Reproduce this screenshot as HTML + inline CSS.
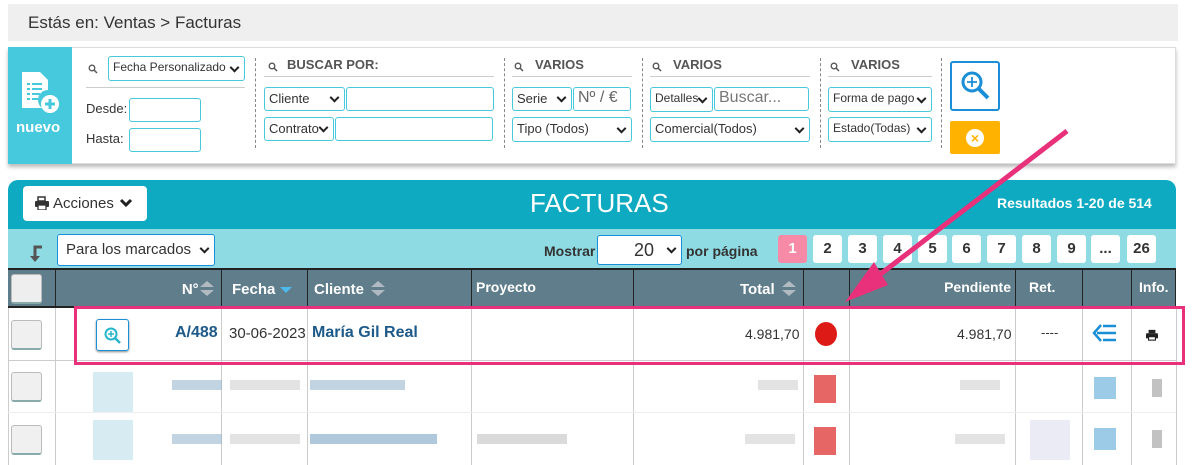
<!DOCTYPE html>
<html><head><meta charset="utf-8"><style>
*{box-sizing:border-box;margin:0;padding:0}
body{width:1194px;height:465px;overflow:hidden;background:#fff;font-family:"Liberation Sans",sans-serif;position:relative;color:#333}
.a{position:absolute}
.inp{position:absolute;border:1px solid #46c9dc;border-radius:3px;background:#fff;font-size:13px;padding:3px 4px;color:#333;white-space:nowrap;overflow:hidden}
.sel{padding-right:16px}
.sel::after{content:"";position:absolute;right:6px;top:50%;width:5px;height:5px;border-right:2px solid #222;border-bottom:2px solid #222;transform:translateY(-70%) rotate(45deg)}
.lbl{position:absolute;font-size:13px;font-weight:bold;color:#555}
.sep{position:absolute;border-left:1px dashed #888;top:58px;height:90px}
.hl{position:absolute;border-bottom:1px solid #ccc}
.pg{position:absolute;top:235px;width:29px;height:28px;background:#fff;border-radius:3px;text-align:center;line-height:28px;font-size:15px;font-weight:bold;color:#333}
.th{position:absolute;top:268px;height:40px;border-left:1px solid #222;color:#fff;font-weight:bold;font-size:15px}
.vl{position:absolute;border-left:1px solid #ccc;top:308px;height:157px}
.cb{position:absolute;left:11px;width:31px;height:30px;background:#f0f0f0;border:1px solid #bbb;border-bottom:2px solid #8aa;border-radius:3px}
.bl{position:absolute;height:10px;opacity:.55}
.mg{display:inline-block;vertical-align:middle}
.srt{display:inline-block;width:0;height:0;vertical-align:middle;margin-left:4px;position:relative;top:-1px}
.srt::before{content:"";position:absolute;left:-7px;top:-8px;border:7px solid transparent;border-top:none;border-bottom:6px solid #b0bac0}
.srt::after{content:"";position:absolute;left:-7px;top:1px;border:7px solid transparent;border-bottom:none;border-top:6px solid #b0bac0}
</style></head><body>
<div class="a" style="left:8px;top:4px;width:1170px;height:37px;background:#efefef"></div>
<div class="a" style="left:28px;top:13px;font-size:17px;color:#333">Estás en: Ventas &gt; Facturas</div>

<div class="a" style="left:8px;top:47px;width:1168px;height:117px;border:1px solid #ddd;box-shadow:0 3px 4px #bbb;background:#fff"></div>
<div class="a" style="left:8px;top:47px;width:64px;height:117px;background:#46c9dc"></div>
<svg class="a" style="left:20px;top:70px" width="42" height="46" viewBox="0 0 42 46"><path d="M2 2h18l8 8v10a10 10 0 0 0-6 18H2z" fill="#fff"/><g stroke="#46c9dc" stroke-width="2"><path d="M7 14h3M12 14h10M7 19h3M12 19h10M7 24h3M12 24h8M7 29h3M12 29h6"/></g><circle cx="30" cy="34" r="9" fill="#fff"/><path d="M30 29v10M25 34h10" stroke="#46c9dc" stroke-width="3"/></svg>
<div class="a" style="left:16px;top:119px;color:#fff;font-weight:bold;font-size:15px">nuevo</div>

<svg class="a" style="left:88px;top:64px" width="10" height="10" viewBox="0 0 10 10"><circle cx="4" cy="4" r="2.8" fill="none" stroke="#555" stroke-width="1.3"/><path d="M6 6l3 3" stroke="#555" stroke-width="1.5"/></svg>
<div class="inp sel" style="left:108px;top:56px;width:137px;height:25px;font-size:12px">Fecha Personalizado</div>
<div class="hl" style="left:86px;top:87px;width:159px"></div>
<div class="a" style="left:86px;top:101px;font-size:13px">Desde:</div>
<div class="a" style="left:86px;top:131px;font-size:13px">Hasta:</div>
<div class="inp" style="left:129px;top:98px;width:72px;height:24px"></div>
<div class="inp" style="left:129px;top:128px;width:72px;height:24px"></div>
<div class="sep" style="left:255px"></div>

<svg class="a" style="left:268px;top:62px" width="10" height="10" viewBox="0 0 10 10"><circle cx="4" cy="4" r="2.8" fill="none" stroke="#555" stroke-width="1.3"/><path d="M6 6l3 3" stroke="#555" stroke-width="1.5"/></svg>
<div class="lbl" style="left:287px;top:57px">BUSCAR POR:</div>
<div class="hl" style="left:264px;top:76px;width:230px"></div>
<div class="inp sel" style="left:264px;top:87px;width:81px;height:24px">Cliente</div>
<div class="inp" style="left:346px;top:87px;width:148px;height:24px"></div>
<div class="inp sel" style="left:264px;top:117px;width:70px;height:24px">Contrato</div>
<div class="inp" style="left:335px;top:117px;width:158px;height:24px"></div>
<div class="sep" style="left:504px"></div>

<svg class="a" style="left:514px;top:62px" width="10" height="10" viewBox="0 0 10 10"><circle cx="4" cy="4" r="2.8" fill="none" stroke="#555" stroke-width="1.3"/><path d="M6 6l3 3" stroke="#555" stroke-width="1.5"/></svg>
<div class="lbl" style="left:535px;top:57px">VARIOS</div>
<div class="hl" style="left:512px;top:76px;width:120px"></div>
<div class="inp sel" style="left:512px;top:87px;width:60px;height:24px">Serie</div>
<div class="inp" style="left:573px;top:87px;width:58px;height:24px;font-size:16px;padding:1px 4px;color:#666">Nº / €</div>
<div class="inp sel" style="left:512px;top:117px;width:120px;height:25px">Tipo (Todos)</div>
<div class="sep" style="left:642px"></div>

<svg class="a" style="left:652px;top:62px" width="10" height="10" viewBox="0 0 10 10"><circle cx="4" cy="4" r="2.8" fill="none" stroke="#555" stroke-width="1.3"/><path d="M6 6l3 3" stroke="#555" stroke-width="1.5"/></svg>
<div class="lbl" style="left:673px;top:57px">VARIOS</div>
<div class="hl" style="left:650px;top:76px;width:160px"></div>
<div class="inp sel" style="left:650px;top:87px;width:63px;height:25px;font-size:12px">Detalles</div>
<div class="inp" style="left:714px;top:87px;width:95px;height:24px;font-size:16px;padding:1px 4px;color:#777">Buscar...</div>
<div class="inp sel" style="left:650px;top:117px;width:160px;height:25px">Comercial(Todos)</div>
<div class="sep" style="left:820px"></div>

<svg class="a" style="left:830px;top:62px" width="10" height="10" viewBox="0 0 10 10"><circle cx="4" cy="4" r="2.8" fill="none" stroke="#555" stroke-width="1.3"/><path d="M6 6l3 3" stroke="#555" stroke-width="1.5"/></svg>
<div class="lbl" style="left:851px;top:57px">VARIOS</div>
<div class="hl" style="left:828px;top:76px;width:104px"></div>
<div class="inp sel" style="left:828px;top:87px;width:104px;height:25px;font-size:12px">Forma de pago</div>
<div class="inp sel" style="left:828px;top:117px;width:104px;height:25px;font-size:12px">Estado(Todas)</div>
<div class="sep" style="left:941px"></div>

<div class="a" style="left:950px;top:61px;width:50px;height:50px;border:2px solid #1a8fd8;border-radius:3px"></div>
<svg class="a" style="left:959px;top:69px" width="32" height="34" viewBox="0 0 32 34"><circle cx="13" cy="13" r="9" fill="none" stroke="#1a8fd8" stroke-width="3"/><path d="M13 8v10M8 13h10" stroke="#1a8fd8" stroke-width="1.8"/><path d="M20 20l9 9" stroke="#1a8fd8" stroke-width="4"/></svg>
<div class="a" style="left:950px;top:121px;width:50px;height:33px;background:#ffb300;border-radius:2px"></div>
<div class="a" style="left:966px;top:129px;width:18px;height:18px;border-radius:50%;background:#fff;color:#ffb300;font-size:14px;font-weight:bold;text-align:center;line-height:18px">×</div>

<div class="a" style="left:8px;top:180px;width:1168px;height:49px;background:#0eaac1;border-radius:10px 10px 0 0"></div>
<div class="a" style="left:23px;top:186px;width:124px;height:35px;background:#fff;border-radius:4px"></div>
<svg class="a" style="left:35px;top:196px" width="14" height="14" viewBox="0 0 14 14"><path d="M3 1h7v4H3z" fill="none" stroke="#333" stroke-width="1.5"/><rect x="0" y="5" width="14" height="6" rx="1" fill="#333"/><rect x="3" y="9" width="8" height="5" fill="#fff" stroke="#333" stroke-width="1.3"/></svg>
<div class="a" style="left:53px;top:195px;font-size:15px;color:#333">Acciones</div>
<svg class="a" style="left:119px;top:198px" width="14" height="10" viewBox="0 0 14 10"><path d="M2 2l5 5 5-5" fill="none" stroke="#222" stroke-width="3"/></svg>
<div class="a" style="left:530px;top:188px;font-size:26px;color:#fff">FACTURAS</div>
<div class="a" style="left:997px;top:195px;font-size:14px;color:#fff;font-weight:bold">Resultados 1-20 de 514</div>

<div class="a" style="left:8px;top:229px;width:1168px;height:39px;background:#8fdbe4"></div>
<svg class="a" style="left:28px;top:245px" width="16" height="18" viewBox="0 0 16 18"><path d="M14 2H7v10" fill="none" stroke="#555" stroke-width="3"/><path d="M2 11h10l-5 6z" fill="#555"/></svg>
<div class="inp sel" style="left:57px;top:234px;width:158px;height:32px;border-color:#1a8fd8;font-size:15px;padding:6px 8px">Para los marcados</div>
<div class="a" style="left:544px;top:243px;font-size:14px;font-weight:bold;color:#333">Mostrar</div>
<div class="inp sel" style="left:597px;top:235px;width:85px;height:30px;border-color:#1a8fd8;font-size:18px;padding:4px 0 0 36px">20</div>
<div class="a" style="left:686px;top:243px;font-size:14px;font-weight:bold;color:#333">por página</div>
<div class="pg" style="left:778px;background:#f78aa6;color:#fff">1</div>
<div class="pg" style="left:813px">2</div><div class="pg" style="left:848px">3</div><div class="pg" style="left:883px">4</div><div class="pg" style="left:918px">5</div><div class="pg" style="left:952px">6</div><div class="pg" style="left:987px">7</div><div class="pg" style="left:1022px">8</div><div class="pg" style="left:1057px">9</div><div class="pg" style="left:1091px">...</div><div class="pg" style="left:1127px">26</div>

<div class="a" style="left:8px;top:268px;width:1168px;height:40px;background:#607d8b;border-top:2px solid #222;border-bottom:2px solid #222"></div>
<div class="cb" style="top:274px;background:#eee"></div>
<div class="th" style="left:55px;width:166px;text-align:right;padding:13px 10px 0 0">N° <span class="srt"></span>&nbsp;</div>
<div class="th" style="left:221px;width:86px;padding:13px 0 0 10px">Fecha <svg width="12" height="8" viewBox="0 0 12 8"><path d="M0 1h12L6 7z" fill="#4db8ea"/></svg></div>
<div class="th" style="left:307px;width:164px;padding:13px 0 0 6px">Cliente <span class="srt" style="margin-left:10px"></span></div>
<div class="th" style="left:471px;width:162px;padding:11px 0 0 4px;font-size:14px">Proyecto</div>
<div class="th" style="left:633px;width:170px;text-align:right;padding:13px 10px 0 0">Total <span class="srt" style="margin-left:10px"></span>&nbsp;</div>
<div class="th" style="left:803px;width:46px"></div>
<div class="th" style="left:849px;width:166px;text-align:right;padding:11px 4px 0 0;font-size:14px">Pendiente</div>
<div class="th" style="left:1015px;width:67px;padding:11px 0 0 13px;font-size:14px">Ret.</div>
<div class="th" style="left:1082px;width:49px"></div>
<div class="th" style="left:1131px;width:45px;padding:11px 0 0 7px;font-size:14px;border-right:1px solid #222">Info.</div>

<div class="vl" style="left:8px"></div><div class="vl" style="left:55px"></div><div class="vl" style="left:221px"></div><div class="vl" style="left:307px"></div><div class="vl" style="left:471px"></div><div class="vl" style="left:633px"></div><div class="vl" style="left:803px"></div><div class="vl" style="left:849px"></div><div class="vl" style="left:1015px"></div><div class="vl" style="left:1082px"></div><div class="vl" style="left:1131px"></div><div class="vl" style="left:1176px"></div>
<div class="a" style="left:8px;top:360px;width:1168px;border-top:1px solid #ccc"></div>
<div class="a" style="left:8px;top:412px;width:1168px;border-top:1px solid #eee"></div>
<div class="cb" style="top:320px"></div><div class="cb" style="top:372px"></div><div class="cb" style="top:425px"></div>

<div class="a" style="left:96px;top:319px;width:33px;height:32px;border:1px solid #1a8fd8;border-radius:3px;box-shadow:0 1px 2px #888"></div>
<svg class="a" style="left:103px;top:326px" width="20" height="20" viewBox="0 0 20 20"><circle cx="8" cy="8" r="5.5" fill="none" stroke="#26b5c9" stroke-width="2"/><path d="M8 5v6M5 8h6" stroke="#26b5c9" stroke-width="1.5"/><path d="M12 12l5 5" stroke="#26b5c9" stroke-width="2.5"/></svg>
<div class="a" style="left:175px;top:324px;font-size:16px;font-weight:bold;color:#1d5a8a">A/488</div>
<div class="a" style="left:229px;top:325px;font-size:15px;color:#333">30-06-2023</div>
<div class="a" style="left:312px;top:324px;font-size:16px;font-weight:bold;color:#1d5a8a">María Gil Real</div>
<div class="a" style="left:745px;top:326px;font-size:14px;color:#333">4.981,70</div>
<div class="a" style="left:815px;top:322px;width:22px;height:24px;border-radius:50%;background:#dd1a16"></div>
<div class="a" style="left:957px;top:326px;font-size:14px;color:#333">4.981,70</div>
<div class="a" style="left:1041px;top:325px;font-size:13px;color:#333">----</div>
<svg class="a" style="left:1092px;top:323px" width="26" height="20" viewBox="0 0 26 20"><path d="M9 2L2 10l7 8" fill="none" stroke="#1a8fd8" stroke-width="2.5"/><path d="M5 10h19M11 3h13M11 17h13" stroke="#1a8fd8" stroke-width="2.5"/></svg>
<svg class="a" style="left:1146px;top:329px" width="12" height="12" viewBox="0 0 14 14"><path d="M3 1h8v4H3z" fill="#222"/><rect x="0" y="5" width="14" height="6" rx="1" fill="#222"/><rect x="3" y="9" width="8" height="4" fill="#fff" stroke="#222" stroke-width="1.3"/></svg>

<div class="bl" style="left:172px;top:380px;width:50px;background:#8fb0c8"></div>
<div class="bl" style="left:230px;top:380px;width:70px;background:#ccc"></div>
<div class="bl" style="left:310px;top:380px;width:95px;background:#8fb0c8"></div>
<div class="bl" style="left:758px;top:380px;width:40px;background:#ccc"></div>
<div class="bl" style="left:960px;top:380px;width:40px;background:#ccc"></div>
<div class="bl" style="left:172px;top:434px;width:50px;background:#8fb0c8"></div>
<div class="bl" style="left:230px;top:434px;width:70px;background:#ccc"></div>
<div class="bl" style="left:310px;top:434px;width:127px;background:#6f9ac0"></div>
<div class="bl" style="left:477px;top:434px;width:90px;background:#bbb"></div>
<div class="bl" style="left:745px;top:434px;width:50px;background:#ccc"></div>
<div class="bl" style="left:955px;top:434px;width:50px;background:#ccc"></div>
<div class="a" style="left:93px;top:372px;width:40px;height:40px;background:#cde6ef;opacity:.8"></div>
<div class="a" style="left:93px;top:420px;width:40px;height:40px;background:#cde6ef;opacity:.8"></div>
<div class="a" style="left:814px;top:375px;width:22px;height:28px;background:#e04040;opacity:.8"></div>
<div class="a" style="left:814px;top:427px;width:22px;height:28px;background:#e04040;opacity:.8"></div>
<div class="a" style="left:1094px;top:377px;width:22px;height:22px;background:#9ccbe8"></div>
<div class="a" style="left:1094px;top:428px;width:22px;height:22px;background:#9ccbe8"></div>
<div class="a" style="left:1152px;top:379px;width:10px;height:18px;background:#999;opacity:.6"></div>
<div class="a" style="left:1152px;top:430px;width:10px;height:18px;background:#999;opacity:.6"></div>
<div class="a" style="left:1030px;top:420px;width:40px;height:40px;background:#dde;opacity:.6"></div>

<div class="a" style="left:74px;top:306px;width:1111px;height:59px;border:3px solid #e8317a"></div>
<svg class="a" style="left:0;top:0" width="1194" height="465"><line x1="1067" y1="131" x2="865" y2="286" stroke="#e8317a" stroke-width="5"/><polygon points="845,302 874,262 888,285" fill="#e8317a"/></svg>
</body></html>
